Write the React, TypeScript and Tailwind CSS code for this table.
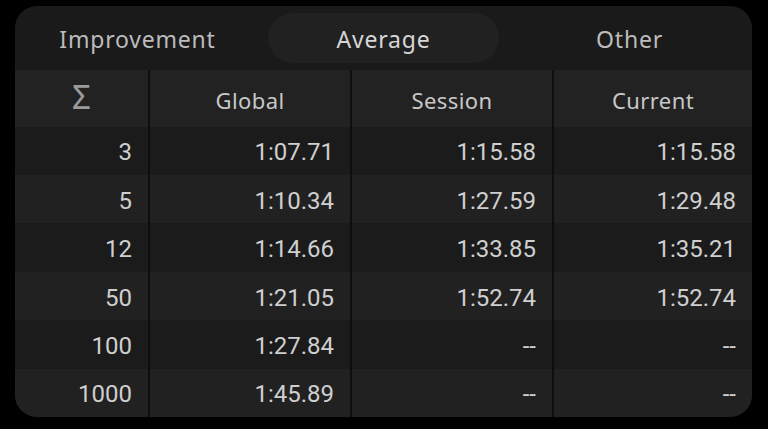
import { useState } from "react";

const TABS = ["Improvement", "Average", "Other"] as const;

const ROWS = [
  ["3", "1:07.71", "1:15.58", "1:15.58"],
  ["5", "1:10.34", "1:27.59", "1:29.48"],
  ["12", "1:14.66", "1:33.85", "1:35.21"],
  ["50", "1:21.05", "1:52.74", "1:52.74"],
  ["100", "1:27.84", "--", "--"],
  ["1000", "1:45.89", "--", "--"],
];

const ui = { fontFamily: '"Noto Sans", "Open Sans", sans-serif' };
const num = { fontFamily: 'Roboto, "Liberation Sans", sans-serif' };

export default function App() {
  const [tab, setTab] = useState<(typeof TABS)[number]>("Average");

  return (
    <div className="w-[768px] h-[429px] bg-black pt-[6px] pl-[15px]">
      <div className="w-[737px] h-[411px] rounded-[22px] bg-[#1a1a1a] overflow-hidden flex flex-col">
        <div className="h-[64px] flex items-center gap-[15px] px-[7px]">
          {TABS.map((t) => (
            <button
              key={t}
              onClick={() => setTab(t)}
              style={ui}
              className={`flex-1 h-[50px] pt-[3px] rounded-full text-[23px] tracking-[0.8px] ${
                tab === t ? "bg-[#212121] text-[#d6d6d6]" : "text-[#bcbcbc]"
              }`}>
              {t}
            </button>
          ))}
        </div>
        <div className="grid grid-cols-[133px_202px_202px_1fr] flex-1">
          <div className="h-[57px] bg-[#222] flex items-center justify-center">
            <span style={ui} className="text-[33px] leading-none text-[#9a9a9a] -mt-[4px]">
              Σ
            </span>
          </div>
          {["Global", "Session", "Current"].map((h) => (
            <div
              key={h}
              style={ui}
              className="h-[57px] pt-[5px] bg-[#222] border-l-2 border-[#0e0e0e] flex items-center justify-center text-[22px] tracking-[0.4px] text-[#c8c8c8]">
              {h}
            </div>
          ))}
          {ROWS.map((row, i) =>
            row.map((cell, j) => (
              <div
                key={`${i}-${j}`}
                style={num}
                className={`h-[48.4px] pt-[3px] flex items-center justify-end pr-4 text-[24px] text-[#cfcfcf] ${
                  i % 2 === 0 ? "bg-[#1b1b1b]" : "bg-[#212121]"
                } ${j > 0 ? "border-l-2 border-[#0e0e0e]" : ""}`}>
                {cell}
              </div>
            ))
          )}
        </div>
      </div>
    </div>
  );
}
